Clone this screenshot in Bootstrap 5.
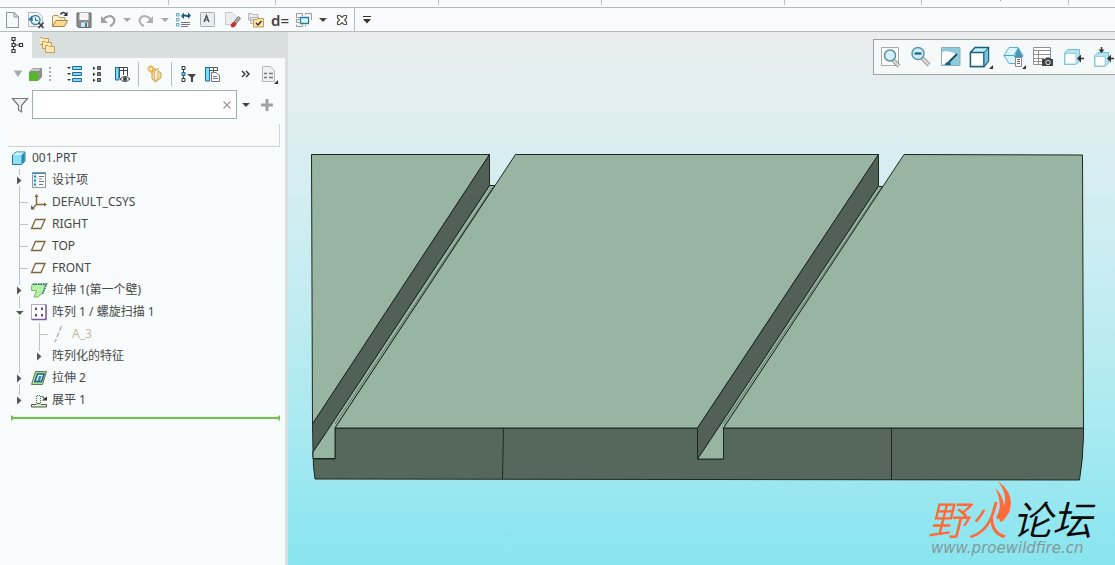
<!DOCTYPE html>
<html lang="zh-CN">
<head>
<meta charset="utf-8">
<meta name="viewport" content="width=device-width, initial-scale=1">
<title>001.PRT</title>
<link href="https://cdn.jsdelivr.net/npm/bootstrap@5.3.0/dist/css/bootstrap.min.css" rel="stylesheet">
<style>
body{font-family:"Noto Sans","Noto Sans CJK SC",sans-serif;font-size:12px;line-height:22px;color:#474747;background:#f8fafb}
svg{display:block;flex:none;fill:none}
button{border:0;background:none;padding:0;color:#444}
.tool{width:24px;height:22px;display:flex;align-items:center;justify-content:center;flex:none}
.tool-drop{width:14px}
.relation{font-size:15px;font-weight:600;line-height:16px}
.ribbon-edge{height:8px;border-bottom:1px solid #b3bfbf}
.ribbon-edge svg{width:100%;height:6px}
.quickbar{height:24px;border-bottom:1px solid #b3bfbf}
.quickbar .tool{height:24px}
.quick-end{border-left:1px solid #b3bfbf;height:23px}
.model-panel{width:288px;border-right:3px solid #d9dfde;background:#f7fbfb;flex:none}
.tab-strip{height:26px;background:#d9dfde;margin-right:-3px}
.tab-on{width:32px;height:26px;background:#f7fbfb}
.tree-tools{height:32px;padding:0 4px 0 12px}
.tool-rule{width:1px;height:24px;background:#b5b9ba;margin:0 4px}
.search-row{height:29px;padding-left:10px}
.search-field{width:205px;height:29px;border:1px solid #a4b0b0;background:#fff;margin-left:2px}
.search-field input{border:0;outline:0;background:none;min-width:0;padding:0 6px}
.head-box{height:23px;margin:5px 5px 0 8px;background:#fafafa;border:solid #d0d3d3;border-width:0 1px 1px 0}
.tree ul,.tree{list-style:none;margin:0;padding:0}
.tree{padding-left:10px}
.tree-line{height:22px;display:flex;align-items:center;white-space:nowrap}
.tree-text{margin-left:4px}
.dimmed{color:#c3b8a3}
.end-mark{margin:3px 5px 0 11px;height:8px}
.viewport3d{background:linear-gradient(#eaedee,#e0eef0 14%,#c9edf2 43%,#a9e9f1 74%,#88e5ef);min-width:0}
.view-bar{top:7px;right:-6px;height:36px;border:1px solid #9fa5a6;background:#f6f9fa;padding-left:2px}
.view-bar button{width:30px;height:34px;display:flex;align-items:center;justify-content:center}
.brand{font:italic 350 40px "Noto Sans CJK SC",sans-serif}
.brand-url{font:italic 15px "DejaVu Sans",sans-serif}
</style>
<script src="https://cdn.jsdelivr.net/npm/bootstrap@5.3.0/dist/js/bootstrap.bundle.min.js"></script>
</head>
<body class="min-vh-100 d-flex flex-column overflow-hidden">
<svg width="0" height="0" class="position-absolute" aria-hidden="true">
  <symbol id="leaf" viewBox="0 0 20 22"><path d="M9.500 0V22M9 11.500H18" stroke="#bdc1c2"/></symbol>
  <symbol id="through" viewBox="0 0 20 22"><path d="M9.500 0V22" stroke="#bdc1c2"/></symbol>
  <symbol id="closed" viewBox="0 0 20 22"><path d="M9.500 0V6M9.500 17V22" stroke="#bdc1c2"/><path d="M7 7.500V15.500L11.500 11.500Z" fill="#555"/></symbol>
  <symbol id="last" viewBox="0 0 20 22"><path d="M9.500 0V6" stroke="#bdc1c2"/><path d="M7 7.500V15.500L11.500 11.500Z" fill="#555"/></symbol>
  <symbol id="opened" viewBox="0 0 20 22"><path d="M9.500 0V7M9.500 15V22" stroke="#bdc1c2"/><path d="M6 10H13.500L9.700 14Z" fill="#555"/></symbol>
  <symbol id="plane" viewBox="0 0 18 18"><path d="M5.500 4.500H15L11 13.500H1.500Z" stroke="#806438" stroke-width="1.300"/></symbol>
  <symbol id="caret" viewBox="0 0 10 6"><path d="M1 1H9L5 5Z" fill="currentColor"/></symbol>
</svg>

<header>
  <div class="ribbon-edge"><svg viewBox="0 0 1115 6" preserveAspectRatio="none"><path d="M168.500 0V5M275.500 0V5M438.500 0V5M601.500 0V5M784.500 0V5M921.500 0V5M1068.500 0V5" stroke="#b9bfc1"/><path d="M1000 0H1001" stroke="#555"/></svg></div>
  <div class="quickbar d-flex" role="toolbar" aria-label="快速访问">
    <button class="tool" aria-label="新建"><svg width="18" height="18"><path d="M3.500 1.500H11L15.500 6V16.500H3.500Z" fill="#f4f9fb" stroke="#8c9499"/><path d="M11 1.500V6H15.500Z" fill="#dfe8ec" stroke="#8c9499"/></svg></button>
    <button class="tool" aria-label="打开会话"><svg width="18" height="18"><path d="M1.500 1.500H11L15.500 6V15.500H1.500Z" fill="#f3f8fb" stroke="#b1b7bb"/><circle cx="8.500" cy="9" r="4.500" fill="#e2f3fa" stroke="#4a87a2" stroke-width="1.500"/><path d="M8.500 6.500V9.500H11" stroke="#2b7290"/><path d="M1 9L5 4.500L6 10Z" fill="#2b7290"/><path d="M11.500 11.500L16.500 17M16.500 11.500L11.500 17" stroke="#444" stroke-width="1.700"/></svg></button>
    <button class="tool" aria-label="打开"><svg width="18" height="18"><path d="M1.500 15.500V5.500L3 4.500H7L8.500 6.500H14V9" fill="#fff0c9" stroke="#b59152"/><path d="M1.500 15.500L5 9.500H16.500L13.500 15.500Z" fill="#fcd994" stroke="#a98342"/><path d="M9.500 3.500C11 1 13 1 15 3" stroke="#333" stroke-width="1.500"/><path d="M12.500 5H16.500V0.500Z" fill="#333"/></svg></button>
    <button class="tool" aria-label="保存"><svg width="18" height="18"><path d="M2 2H16V16.500H3.500L2 15Z" fill="#8b8d8e" stroke="#666"/><path d="M4.500 2H13.500V9H4.500Z" fill="#f4f4f4"/><path d="M6 11.500H13V16H6Z" fill="#c9e7f5"/><path d="M10 12H12V16H10Z" fill="#367ea1"/></svg></button>
    <button class="tool" aria-label="撤消"><svg width="18" height="18"><path d="M4 9C7 4.500 12 4 14.500 7C17 10 14 14 11 15" stroke="#9d9fa1" stroke-width="2"/><path d="M2 5V12H9Z" fill="#9d9fa1"/></svg></button>
    <button class="tool tool-drop" aria-label="撤消列表" style="color:#a5a7a8"><svg width="10" height="6"><use href="#caret"/></svg></button>
    <button class="tool" aria-label="重做"><svg width="18" height="18"><path d="M14 9C11 4.500 6 4 3.500 7C1 10 4 14 7 15" stroke="#adafb0" stroke-width="2"/><path d="M16 5V12H9Z" fill="#adafb0"/></svg></button>
    <button class="tool tool-drop" aria-label="重做列表" style="color:#a5a7a8"><svg width="10" height="6"><use href="#caret"/></svg></button>
    <button class="tool" aria-label="重新生成"><svg width="18" height="18"><path d="M1.500 2.500H4V5H1.500ZM1.500 7.500H4V10H1.500ZM1.500 12.500H4V15H1.500Z" stroke="#5ba6c4"/><path d="M6 11.500H15M6 13.500H15M6 15.500H13" stroke="#777"/><path d="M6 5L9 1.500V3.500H11V5.500H9V8ZM16 4.500L13 8V6H11V4H13V1.500Z" fill="#195f83"/></svg></button>
    <button class="tool" aria-label="注释"><svg width="18" height="18"><rect x="1.500" y="1.500" width="14" height="14" rx="1" fill="#e6eef1" stroke="#a9adaf"/><path d="M5 11L7.500 4.500L10 11M6 9H9" stroke="#444" stroke-width="1.200"/></svg></button>
    <button class="tool" aria-label="拭除"><svg width="18" height="18"><path d="M2.500 1.500H9L13 5.500V13.500H2.500Z" fill="#eceeee" stroke="#c9cbcc"/><path d="M10 12L15.500 5.500L17.500 7.500L12 14Z" fill="#b3aba6" stroke="#77716c"/><ellipse cx="10.500" cy="13.700" rx="3" ry="2.200" transform="rotate(-40 10.500 13.700)" fill="#b63832"/></svg></button>
    <button class="tool" aria-label="工作目录"><svg width="18" height="18"><path d="M1.500 2.500H5L6 3.500H11V9H1.500ZM3.500 6.500H11V12.500H3.500Z" fill="#e9e9e7" stroke="#b5b5b3"/><path d="M6.500 8.500H10L11 7.500H16.500V16H6.500Z" fill="#ffe2a3" stroke="#c29a55"/><path d="M9 12L11 14L14.500 10" stroke="#333" stroke-width="1.400"/></svg></button>
    <button class="tool relation" aria-label="关系">d=</button>
    <button class="tool" aria-label="窗口"><svg width="18" height="18"><path d="M7.500 5V2.500H1.500V6.500H5M10.500 4V2.500H16.500V9M1.500 8.500H4.500M1.500 8.500V11.500H4.500M1.500 13.500V15.500H7.500V13.500M10.500 14V15.500" stroke="#999"/><path d="M5.500 6.500H13.500V12.500H5.500Z" fill="#dbf3fb" stroke="#287ba1" stroke-width="1.300"/></svg></button>
    <button class="tool tool-drop" aria-label="窗口列表"><svg width="10" height="6"><use href="#caret"/></svg></button>
    <button class="tool" aria-label="关闭"><svg width="18" height="18"><path d="M4.500 4.500H7L9 6.500L11 4.500H13.500V7L11.500 9L13.500 11V13.500H11L9 11.500L7 13.500H4.500V11L6.500 9L4.500 7Z" stroke="#555949" stroke-width="1.200"/></svg></button>
    <div class="quick-end"><button class="tool" aria-label="自定义"><svg width="12" height="10"><path d="M2 1.500H10" stroke="#333"/><path d="M2 4H10L6 8.500Z" fill="#333"/></svg></button></div>
  </div>
</header>

<main class="d-flex flex-grow-1">
  <aside class="model-panel">
    <div class="tab-strip d-flex">
      <button class="tab-on d-flex justify-content-center align-items-center" aria-label="模型树"><svg width="16" height="18" class="ms-1"><path d="M3.500 4V14M4 9H9" stroke="#444"/><path d="M2 1.500H5V4.500H2ZM2 7.500H5V10.500H2ZM2 13.500H5V16.500H2ZM9.500 7.500H12.500V10.500H9.500Z" fill="#fff" stroke="#333" stroke-width="1.200"/></svg></button>
      <button class="ps-2" aria-label="文件夹"><svg width="18" height="18"><g fill="#ffe7b5" stroke="#c39d5d"><path d="M-.500 1.500H2L3 2.500H8.500V8.500H-.500Z"/><path d="M2.500 5.500H5L6 6.500H11.500V12.500H2.500Z"/><path d="M5.500 9.500H8L9 10.500H14.500V16.500H5.500Z"/></g></svg></button>
    </div>
    <div class="tree-tools d-flex align-items-center">
      <button class="tool" style="width:12px" aria-label="显示"><svg width="12" height="8"><path d="M1.500 .500H10.500L6 7Z" fill="#aaa"/></svg></button>
      <button class="tool" aria-label="实体"><svg width="18" height="18"><path d="M2 7L6 3H15V12L11 16Z" fill="#8b8f8b"/><path d="M3 6L6.500 3.500H14L11.500 6Z" fill="#c8cac8"/><path d="M2 7H11V16H2Z" fill="#58b532"/></svg></button>
      <svg width="6" height="18"><path d="M2 2V18" stroke="#aaa" stroke-width="2" stroke-dasharray="2 2"/></svg>
      <button class="tool ms-2" aria-label="全部展开"><svg width="18" height="18"><path d="M7.500 1.500H16.500V4.500H7.500ZM7.500 7.500H16.500V10.500H7.500ZM7.500 13.500H16.500V16.500H7.500Z" fill="#7ed8ff" stroke="#216b8d"/><path d="M2 2H6L4 4ZM2 8H6L4 10ZM2 14H6L4 16Z" fill="#333"/></svg></button>
      <button class="tool" aria-label="全部折叠"><svg width="18" height="18"><path d="M8.500 1.500H11.500V4.500H8.500ZM8.500 7.500H11.500V10.500H8.500ZM8.500 13.500H11.500V16.500H8.500Z" fill="#888" stroke="#444"/><path d="M4 1.500V5L6.500 3.300ZM4 7.500V11L6.500 9.300ZM4 13.500V17L6.500 15.300Z" fill="#333"/></svg></button>
      <button class="tool" aria-label="树列"><svg width="18" height="18"><path d="M2 2.500H14.500V11M2 5.500H14.500M6.500 2V13M10.500 2V10" stroke="#444"/><path d="M2.500 2.500H6V15H2.500Z" fill="#7ed8ff" stroke="#216b8d"/><path d="M7 14Q12 9 17 14Q12 19 7 14Z" fill="#eee" stroke="#444"/><circle cx="12" cy="14" r="2" fill="#444"/></svg></button>
      <div class="tool-rule"></div>
      <button class="tool" aria-label="添加文件夹"><svg width="18" height="18"><path d="M6 4H10L12 6L15 8V13L13 14L10 17L6 14Z" fill="#fbdc9c" stroke="#c9a05a"/><path d="M8 7L12 3V13L9 17Z" fill="#fff1ce" stroke="#d3ad6d"/><path d="M5 0V8M1 4H9M2.500 1.500L7.500 6.500M7.500 1.500L2.500 6.500" stroke="#e89d1c" stroke-width="1.200"/><circle cx="5" cy="4" r="1.500" fill="#fff"/></svg></button>
      <div class="tool-rule"></div>
      <button class="tool" aria-label="树过滤器"><svg width="18" height="18"><path d="M4.500 4V14" stroke="#444"/><path d="M3 1.500H6V4.500H3ZM3 13.500H6V16.500H3Z" fill="#fff" stroke="#333"/><path d="M3 7.500H6V10.500H3Z" fill="#61c9f3" stroke="#216b8d"/><path d="M8 9H17L14 12.500V17H12V12.500Z" fill="#444"/></svg></button>
      <button class="tool" aria-label="列设置"><svg width="18" height="18"><path d="M2 2.500H14.500V6M2 5.500H14.500M10.500 2V7" stroke="#555"/><path d="M2.500 2.500H6.500V16H2.500Z" fill="#7ed8ff" stroke="#216b8d"/><path d="M8.500 7.500H13L16.500 10.500V16.500H8.500Z" fill="#f7f7f7" stroke="#777"/><path d="M10 11.500H14M10 13.500H15" stroke="#777"/></svg></button>
      <button class="tool ms-auto" aria-label="更多"><svg width="12" height="10"><path d="M3 2L6 5L3 8M7 2L10 5L7 8" stroke="#333" stroke-width="1.400"/></svg></button>
      <button class="tool" aria-label="设置"><svg width="20" height="20"><path d="M3.500 2.500H11L15.500 6.500V17.500H3.500Z" fill="#eef2f3" stroke="#b3b9bb"/><path d="M5 9.500H8M10 9.500H14M5 13.500H8M10 13.500H14" stroke="#777" stroke-width="1.300"/><path d="M19 16V20H15Z" fill="#333"/></svg></button>
    </div>
    <div class="search-row d-flex align-items-center">
      <svg width="20" height="20"><path d="M2.500 3.500H17.500L11.500 10.500V17L8.500 15V10.500Z" fill="#eef0f1" stroke="#777" stroke-width="1.200"/></svg>
      <div class="search-field d-flex align-items-center"><input class="flex-grow-1" type="text" id="find" aria-label="搜索"><button class="me-1" aria-label="清除"><svg width="10" height="10"><path d="M1.500 1.500L8.500 8.500M8.500 1.500L1.500 8.500" stroke="#999" stroke-width="1.300"/></svg></button></div>
      <button class="ms-1" aria-label="搜索选项"><svg width="10" height="6"><use href="#caret"/></svg></button>
      <button class="ms-2" aria-label="添加"><svg width="16" height="12"><path d="M8 0V12M2 6H14" stroke="#a0a3a4" stroke-width="3"/></svg></button>
    </div>
    <div class="head-box"></div>

    <ul class="tree">
      <li><div class="tree-line"><svg width="18" height="18"><path d="M2.500 6L6 3H15V12L11.500 15.500H2.500Z" fill="#8edff8" stroke="#247ca1"/><path d="M3 6L6 3.500H14L11.500 6Z" fill="#d2f5ff"/><path d="M11.500 6L14.500 3.500V12L11.500 15Z" fill="#248ab6"/></svg><span class="tree-text">001.PRT</span></div>
      <ul>
        <li class="tree-line"><svg width="20" height="22"><use href="#closed"/></svg><svg width="18" height="18"><path d="M2.500 1.500H15.500V16.500H2.500Z" fill="#fff" stroke="#91999d"/><path d="M3 2H7V16H3Z" fill="#e2f4fb"/><path d="M3 2.500H15" stroke="#248fb7"/><path d="M4 5.500H6M4 9.500H6M4 13.500H6" stroke="#168abb" stroke-width="2"/><path d="M9 5.500H14M9 8H12M9 10.500H14M9 13.500H13" stroke="#777"/></svg><span class="tree-text">设计项</span></li>
        <li class="tree-line"><svg width="20" height="22"><use href="#leaf"/></svg><svg width="18" height="18"><path d="M6.500 3V11.500H15M6 12L2 16" stroke="#806438" stroke-width="1.400"/><path d="M4.500 4L6.500 1L8.500 4ZM14 9.500L17 11.500L14 13.500ZM1 12V16.500H5Z" fill="#806438"/></svg><span class="tree-text">DEFAULT_CSYS</span></li>
        <li class="tree-line"><svg width="20" height="22"><use href="#leaf"/></svg><svg width="18" height="18"><use href="#plane"/></svg><span class="tree-text">RIGHT</span></li>
        <li class="tree-line"><svg width="20" height="22"><use href="#leaf"/></svg><svg width="18" height="18"><use href="#plane"/></svg><span class="tree-text">TOP</span></li>
        <li class="tree-line"><svg width="20" height="22"><use href="#leaf"/></svg><svg width="18" height="18"><use href="#plane"/></svg><span class="tree-text">FRONT</span></li>
        <li class="tree-line"><svg width="20" height="22"><use href="#closed"/></svg><svg width="18" height="18"><path d="M2 3.500H16L12.500 12L8 16H4L6.500 9.500H1.500V7Z" fill="#b6efa6" stroke="#75b96b"/><path d="M3 3H16.500L12.500 13" stroke="#176380" stroke-width="1.500" stroke-dasharray="1.500 1"/></svg><span class="tree-text">拉伸 1(第一个壁)</span></li>
        <li><div class="tree-line"><svg width="20" height="22"><use href="#opened"/></svg><svg width="18" height="18"><path d="M1.500 1.500H16V16.500H1.500Z" fill="#fff" stroke="#b5acbf"/><path d="M16 1.500V16.500H1.500" stroke="#755c9b" stroke-width="1.400"/><path d="M5 4.500H7V7H5ZM11 4.500H13V7H11ZM5 11H7V13.500H5ZM11 11H13V13.500H11Z" fill="#65439a"/></svg><span class="tree-text">阵列 1 / 螺旋扫描 1</span></div>
          <ul>
            <li class="tree-line dimmed"><svg width="20" height="22"><use href="#through"/></svg><svg width="20" height="22"><use href="#leaf"/></svg><svg width="18" height="18"><path d="M11.500 1L5 17" stroke="#b3b3b0" stroke-width="1.400" stroke-dasharray="5 2"/></svg><span class="tree-text">A_3</span></li>
            <li class="tree-line"><svg width="20" height="22"><use href="#through"/></svg><svg width="18" height="22" viewBox="0 0 18 22"><use href="#last" width="20" height="22"/></svg><span class="tree-text">阵列化的特征</span></li>
          </ul>
        </li>
        <li class="tree-line"><svg width="20" height="22"><use href="#closed"/></svg><svg width="18" height="18"><path d="M5.500 2.500H16.500L12.500 15.500H1.500Z" fill="#a3dd96" stroke="#65775d"/><path d="M7.500 5H14L11.500 12.500H5Z" fill="#fff" stroke="#155e89" stroke-width="1.500"/><path d="M9 7H11.500L10 12H7.500Z" fill="#2f86b3"/></svg><span class="tree-text">拉伸 2</span></li>
        <li class="tree-line"><svg width="20" height="22"><use href="#last"/></svg><svg width="18" height="18"><path d="M1.500 13.500H6L7 12.500H10L11 13.500H16.500V16H1.500Z" fill="#d7eccf" stroke="#4e5c49"/><path d="M6.500 12V4.500H10.500V12" stroke="#327429" stroke-dasharray="1 1"/><path d="M11.500 5.500Q14 5.500 14.500 8" stroke="#333"/><path d="M12 9.500H17V5.500Z" fill="#333"/></svg><span class="tree-text">展平 1</span></li>
      </ul></li>
    </ul>
    <svg class="end-mark" width="269" viewBox="0 0 269 8"><path d="M0 4H269" stroke="#6bc747" stroke-width="2"/><path d="M0 1L4 4L0 7ZM269 1L265 4L269 7Z" fill="#6bc747"/></svg>
  </aside>

  <section class="viewport3d flex-grow-1 position-relative overflow-hidden">
    <svg class="w-100" viewBox="288 32 827 533" role="img" aria-label="零件模型">
      <g stroke="#1d2921" stroke-width="1" stroke-linejoin="round">
        <path d="M313 452L313.500 459H335V428H697.500V459H723.500V428H1083.500V436Q1083 460 1079.500 480L315 479Q313 467 313 452Z" fill="#56685b"/>
        <path d="M311.500 154.500L489.500 154.500L312.500 424Z" fill="#98b4a2"/>
        <path d="M489.500 185.500H495L335 428V458.500H313V452Z" fill="#98b4a2"/>
        <path d="M489.500 154.500V185.500L313 452L312.500 424Z" fill="#526157"/>
        <path d="M515.500 154.500H878.500L697.500 428H335Z" fill="#98b4a2"/>
        <path d="M878 186.500H883.500L723.500 428V459H697.500Z" fill="#98b4a2"/>
        <path d="M878.500 154.500V186L697.500 459V428Z" fill="#526157"/>
        <path d="M904 154.500L1082.500 155L1083.500 428H723.500Z" fill="#98b4a2"/>
        <path d="M493 187L335 424M881.500 187L723.500 424" stroke-opacity=".45"/>
        <path d="M503.500 428L502.500 479M891.500 428V480"/>
      </g>
      <text x="928" y="535" class="brand" fill="#ff6b38">野火</text>
      <text x="1012" y="535" class="brand" fill="#080808">论坛</text>
      <path d="M998 481Q1011 491 1011 503Q1010 513 1003 521L996 518Q1004 505 995 488Q1003 495 1004 506Q1008 495 998 481Z" fill="#ff6b38"/>
      <text x="931" y="553" class="brand-url" fill="#84999b">www.proewildfire.cn</text>
    </svg>
    <div class="view-bar position-absolute d-flex" role="toolbar" aria-label="视图">
      <button aria-label="重新调整"><svg width="22" height="22"><path d="M1.500 1.500H18.500V19.500H1.500Z" fill="#fbfbfb" stroke="#aaa"/><path d="M13 14L19 20" stroke="#999" stroke-width="4"/><path d="M13 14L19 20" stroke="#ddd" stroke-width="2"/><circle cx="10" cy="9.500" r="5.500" fill="#d6f1fa" stroke="#5a93ae" stroke-width="1.500"/></svg></button>
      <button aria-label="缩小"><svg width="22" height="22"><path d="M12 12L19 19" stroke="#999" stroke-width="4"/><path d="M12 12L19 19" stroke="#e1e1e1" stroke-width="2"/><circle cx="8" cy="7.500" r="6" fill="#cfeef9" stroke="#5a93ae" stroke-width="1.500"/><path d="M4.500 7.500H11.500" stroke="#19658b" stroke-width="2.200"/></svg></button>
      <button aria-label="重画"><svg width="22" height="22"><path d="M1.500 1.500H20V19.500H1.500Z" fill="#8ecbdd" stroke="#8badb9"/><path d="M2 6Q9 4 16 8L7 17L2 19Z" fill="#fff"/><path d="M17 8L9 16" stroke="#254f62" stroke-width="2"/><path d="M5 19Q6 15 10 16L11 19Z" fill="#186286"/></svg></button>
      <button aria-label="显示样式"><svg width="26" height="24"><path d="M2.500 7.500L7 2.500H20.500V16L16 21.500H2.500Z" fill="#bfedf9" stroke="#195f7e" stroke-width="1.400"/><path d="M2.500 7.500H16V21.500H2.500Z" fill="#fff" stroke="#195f7e" stroke-width="1.400"/><path d="M16 7.500L20.500 2.500V16L16 21.500Z" fill="#76c4dd" stroke="#195f7e"/><path d="M25 20V24H21Z" fill="#333"/></svg></button>
      <button class="ms-1" aria-label="已保存方向"><svg width="26" height="24"><path d="M7 2.500H16L21 10.500L16 18.500H7L2 10.500Z" fill="#dbf6fd" stroke="#5fadc6"/><path d="M2 10.500H12L16 3.500M12 10.500L16 17.500" stroke="#4aa0bc"/><path d="M16 2.500L21 12H12.500Z" fill="#4497b7"/><path d="M13.500 12.500H19.500V21.500H13.500Z" fill="#fff" stroke="#888"/><path d="M15 14.500H18M15 16.500H18M15 18.500H18" stroke="#666"/><path d="M24 20V24H20Z" fill="#333"/></svg></button>
      <button aria-label="视图管理器"><svg width="24" height="22"><path d="M.500 1.500H17.500V18.500H.500ZM.500 4.500H17.500M.500 8.500H17.500M.500 12.500H11M.500 15.500H11M5.500 5V19" fill="#fff" stroke="#8d9192"/><path d="M9 13H12L13 11.500H17L18 13H20V20H9Z" fill="#444"/><circle cx="15" cy="16.500" r="2.200" stroke="#ddd"/></svg></button>
      <button aria-label="外观"><svg width="22" height="22"><path d="M.500 7L4 3.500H15.500V15L12 18.500H.500Z" fill="#b1e3f3" stroke="#77bdd2"/><path d="M1 7.500H12V18H1Z" fill="#fff" stroke="#9bcede"/><path d="M14 12.500H20" stroke="#333" stroke-width="1.500"/><path d="M13 12.500L17 8.500V16.500Z" fill="#333"/></svg></button>
      <button aria-label="剖面"><svg width="22" height="22"><path d="M.500 10L4 6.500H14.500V17L11 20.500H.500Z" fill="#b1e3f3" stroke="#77bdd2"/><path d="M1 10.500H11V20H1Z" fill="#fff" stroke="#9bcede"/><path d="M7.500 1V5M14 12.500H20" stroke="#333" stroke-width="1.500"/><path d="M7.500 7L4.500 3.500H10.500ZM13 12.500L17 8.500V16.500Z" fill="#333"/></svg></button>
    </div>
  </section>
</main>
</body>
</html>
